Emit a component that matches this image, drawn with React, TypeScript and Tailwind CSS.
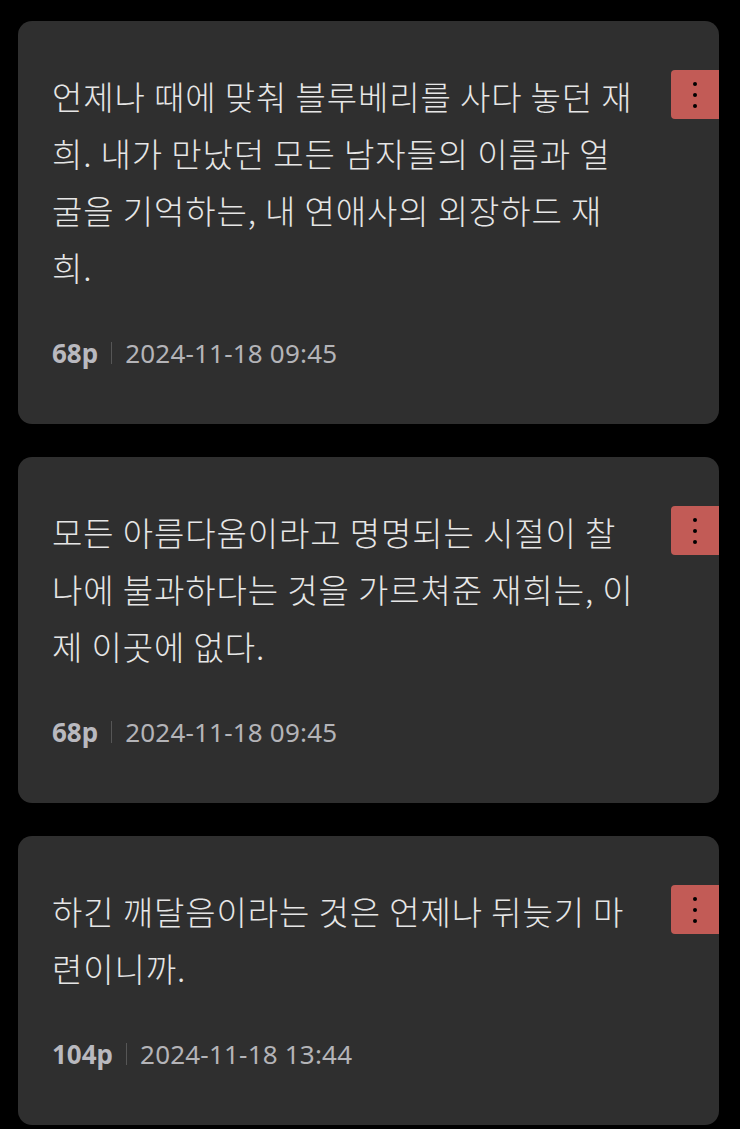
import React from 'react';

interface Comment {
  id: number;
  body: string;
  points: string;
  date: string;
}

const comments: Comment[] = [
  {
    id: 1,
    body: '언제나 때에 맞춰 블루베리를 사다 놓던 재희. 내가 만났던 모든 남자들의 이름과 얼굴을 기억하는, 내 연애사의 외장하드 재희.',
    points: '68p',
    date: '2024-11-18 09:45',
  },
  {
    id: 2,
    body: '모든 아름다움이라고 명명되는 시절이 찰나에 불과하다는 것을 가르쳐준 재희는, 이제 이곳에 없다.',
    points: '68p',
    date: '2024-11-18 09:45',
  },
  {
    id: 3,
    body: '하긴 깨달음이라는 것은 언제나 뒤늦기 마련이니까.',
    points: '104p',
    date: '2024-11-18 13:44',
  },
];

function CommentCard({ comment }: { comment: Comment }) {
  return (
    <div className="flex items-start bg-[#2f2f2f] rounded-[14px] overflow-hidden">
      <div className="flex-1 pl-[34px] pr-[35px] pt-[47px] pb-[55px]">
        <p className="text-[33px] leading-[57px] tracking-[0.9px] font-light text-[#e6e6e6] font-['Noto_Sans_CJK_KR','Noto_Sans',sans-serif]">
          {comment.body}
        </p>
        <div className="mt-[41px] flex items-center h-[32px] text-[26px] font-['Noto_Sans','Noto_Sans_CJK_KR',sans-serif]">
          <span className="font-bold text-[#b9b9bf]">{comment.points}</span>
          <span className="mx-[13px] w-px h-[22px] bg-[#565656]" />
          <span className="tracking-[0.2px] text-[#b4b4b8]">{comment.date}</span>
        </div>
      </div>
      {/* more menu */}
      <button className="mt-[49px] w-[48px] h-[49px] shrink-0 rounded-l-[4px] bg-[#c25b56] flex flex-col items-center justify-center gap-[7px]">
        <span className="w-[4px] h-[4px] rounded-full bg-black" />
        <span className="w-[4px] h-[4px] rounded-full bg-black" />
        <span className="w-[4px] h-[4px] rounded-full bg-black" />
      </button>
    </div>
  );
}

export default function App() {
  return (
    <div className="min-h-screen bg-black pl-[18px] pr-[21px] pt-[21px] pb-[6px] flex flex-col gap-[33px]">
      {comments.map((c) => (
        <CommentCard key={c.id} comment={c} />
      ))}
    </div>
  );
}
